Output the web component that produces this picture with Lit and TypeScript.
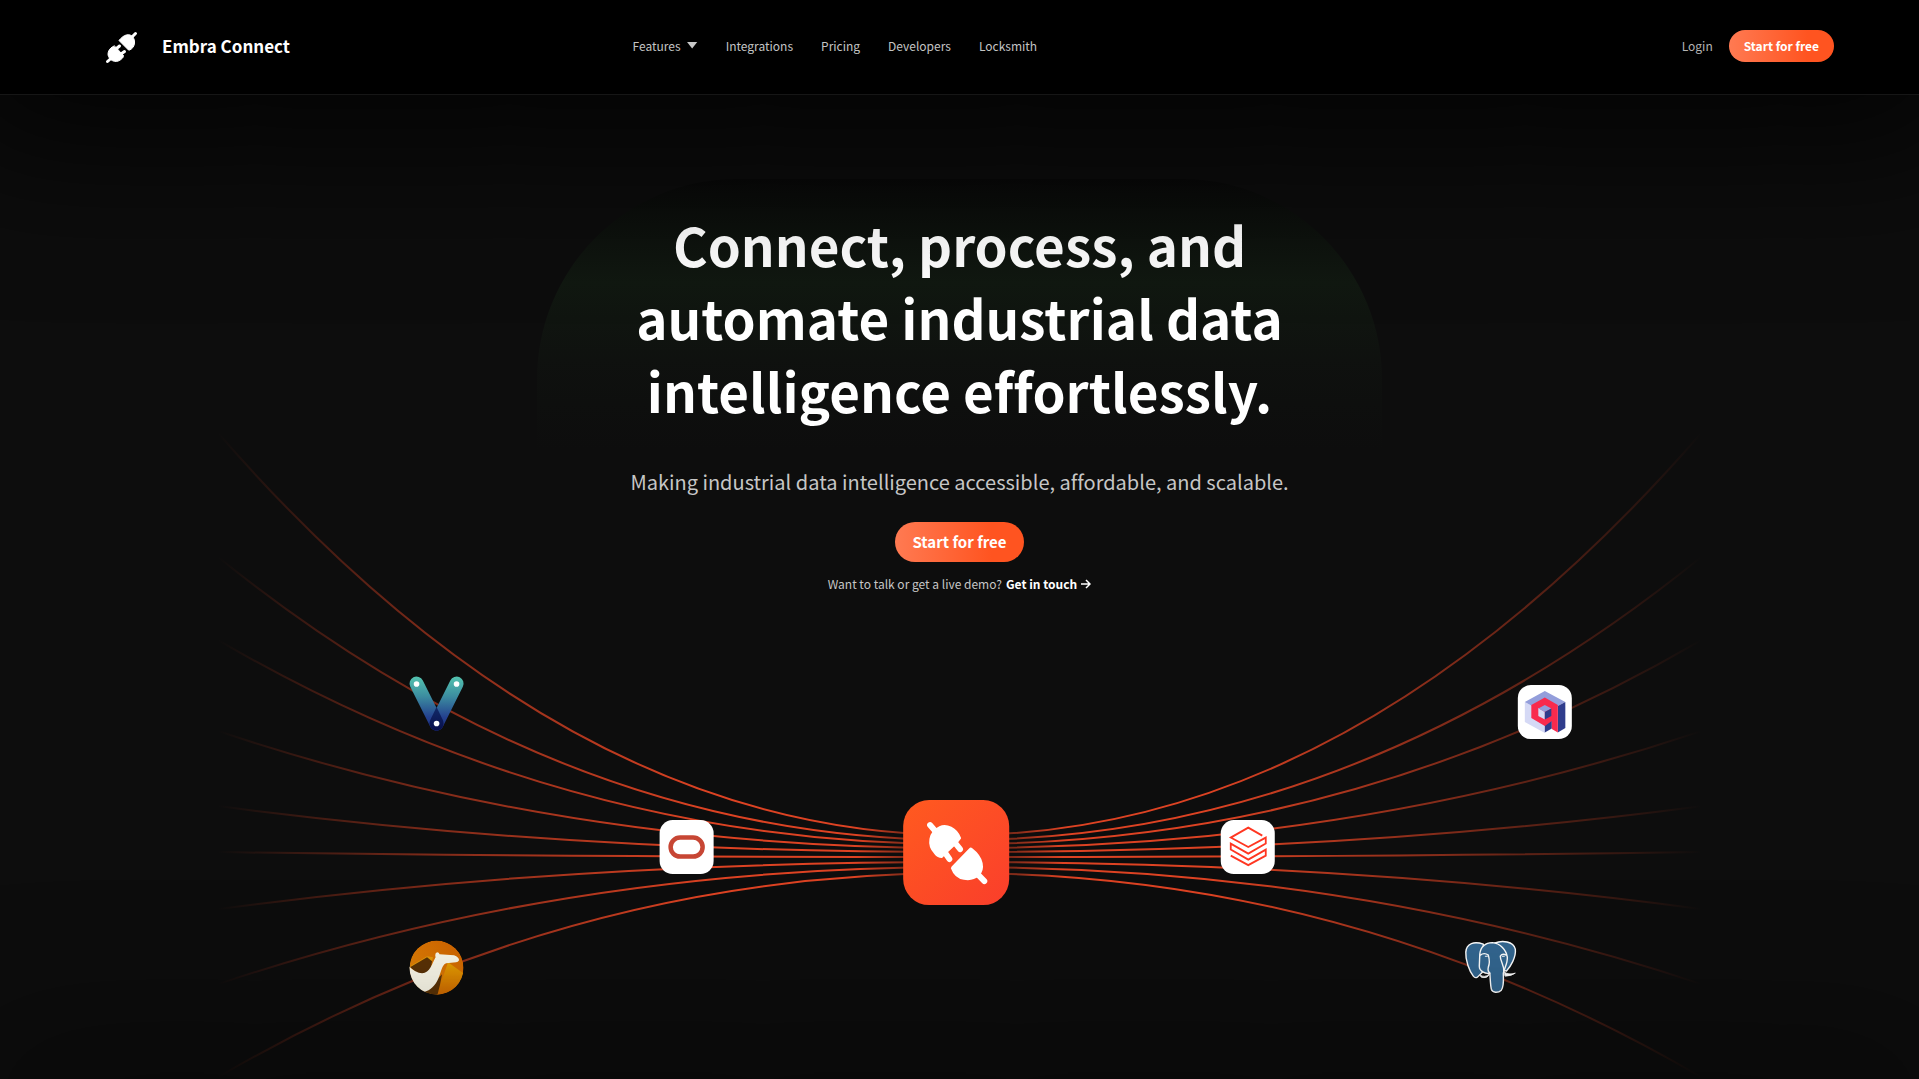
import { LitElement, html, svg, css } from "lit";
import { customElement } from "lit/decorators.js";

interface Strand {
  from: number;
  to: number;
}

/* Height of each strand at the outer edge and where it meets the hub. */
const STRANDS: Strand[] = [
  { from: 433, to: 835 },
  { from: 557, to: 840 },
  { from: 640, to: 844 },
  { from: 731, to: 848 },
  { from: 806, to: 852 },
  { from: 852, to: 857 },
  { from: 909, to: 862 },
  { from: 984, to: 867 },
  { from: 1077, to: 873 },
];

const NAV_LINKS = ["Integrations", "Pricing", "Developers", "Locksmith"];

/* Two plug halves on a 64 x 64 grid. */
const plugShape = svg`
  <g fill="#fff" stroke="#fff" stroke-linecap="round" stroke-linejoin="round">
    <path stroke-width="6" d="M5 5L13 14M31 23L36 29M20 32L25 39M54 54L61 61" />
    <path stroke-width="2" d="M36 18C32 8 22 4 15 7C4 12 2 25 10 33C12 35.5 14 37 17 37L21 33L32 23Z" />
    <path stroke-width="2" d="M48 29C60 38 61 49 55 55C47 62 32 60 28 49Q27 48 28 47L46 29Q47 28 48 29Z" />
  </g>
`;

@customElement("connection-map")
export class ConnectionMap extends LitElement {
  static styles = css`
    :host {
      display: block;
    }
    .map {
      display: block;
      width: 100%;
      height: auto;
    }
  `;

  private strands() {
    return STRANDS.map(
      ({ from, to }) => svg`
        <path d="M218 ${from}Q568 ${to} 960 ${to}" stroke="url(#fade-left)" />
        <path d="M1701 ${from}Q1351 ${to} 959 ${to}" stroke="url(#fade-right)" />
      `,
    );
  }

  render() {
    return html`
      <svg class="map" viewBox="218 430 1483 649" role="img" aria-label="Connected data sources">
        <defs>
          <linearGradient id="fade-left" gradientUnits="userSpaceOnUse" x1="218" y1="0" x2="960" y2="0">
            <stop offset="0" stop-color="#ff4b26" stop-opacity="0" />
            <stop offset="0.28" stop-color="#ff4b26" stop-opacity="0.46" />
            <stop offset="0.66" stop-color="#ff4b26" stop-opacity="0.86" />
            <stop offset="0.86" stop-color="#ff4b26" stop-opacity="0.86" />
            <stop offset="0.94" stop-color="#ff4b26" stop-opacity="0.4" />
          </linearGradient>
          <linearGradient id="fade-right" gradientUnits="userSpaceOnUse" x1="1701" y1="0" x2="959" y2="0">
            <stop offset="0" stop-color="#ff4b26" stop-opacity="0" />
            <stop offset="0.28" stop-color="#ff4b26" stop-opacity="0.4" />
            <stop offset="0.66" stop-color="#ff4b26" stop-opacity="0.86" />
            <stop offset="0.86" stop-color="#ff4b26" stop-opacity="0.86" />
            <stop offset="0.94" stop-color="#ff4b26" stop-opacity="0.4" />
          </linearGradient>
          <linearGradient id="hub" x1="0" y1="0" x2="1" y2="1">
            <stop offset="0" stop-color="#ff5a1f" />
            <stop offset="1" stop-color="#fb3f2c" />
          </linearGradient>
          <linearGradient id="arm" gradientUnits="userSpaceOnUse" x1="0" y1="678" x2="0" y2="730">
            <stop offset="0" stop-color="#52bfae" />
            <stop offset="0.35" stop-color="#3c8da0" />
            <stop offset="0.75" stop-color="#24418f" />
            <stop offset="1" stop-color="#1c2f80" />
          </linearGradient>
          <linearGradient id="joint" x1="0" y1="0" x2="0" y2="1">
            <stop offset="0" stop-color="#122a68" />
            <stop offset="1" stop-color="#080f4c" />
          </linearGradient>
          <linearGradient id="dune" x1="0" y1="0" x2="0" y2="1">
            <stop offset="0" stop-color="#e8a200" />
            <stop offset="1" stop-color="#cf6600" />
          </linearGradient>
          <linearGradient id="sky" x1="0" y1="1" x2="1" y2="0">
            <stop offset="0" stop-color="#e68a08" />
            <stop offset="1" stop-color="#cf6200" />
          </linearGradient>
          <clipPath id="disc"><circle cx="436.5" cy="967.5" r="27" /></clipPath>
        </defs>

        <g fill="none" stroke-width="2">${this.strands()}</g>

        <g stroke="url(#arm)" stroke-width="14" stroke-linecap="round" fill="none">
          <path d="M416.5 683.5L436.5 723.5" />
          <path d="M456.5 683.5L436.5 723.5" />
        </g>
        <path
          fill="url(#joint)"
          d="M436.5 707L442.8 720C445 725 442 730.5 436.5 730.5C431 730.5 428 725 430.2 720Z"
        />
        <g fill="#fff">
          <circle cx="416.5" cy="684" r="2.8" />
          <circle cx="456.5" cy="684" r="2.8" />
          <circle cx="436.5" cy="723.5" r="2.8" />
        </g>

        <g fill="#fff">
          <rect x="659.5" y="820" width="54" height="54" rx="13" />
          <rect x="1220.5" y="820" width="54" height="54" rx="13" />
          <rect x="1517.5" y="685" width="54" height="54" rx="13" />
        </g>
        <rect x="670.5" y="837.5" width="32" height="19" rx="9.5" fill="none" stroke="#c74634" stroke-width="4.5" />

        <path
          fill="none"
          stroke="#ff3621"
          stroke-width="1.8"
          d="M1262 835.5L1248 827.5L1230.5 837.5L1248 847L1265.5 837.5V843.5L1248 853.5L1230.5 843.5V849.5L1248 859.5L1265.5 849.5V855.5L1248 865L1230.5 855.5"
        />

        <path fill="#d5d9f5" d="M1524.5 702L1544.5 713V733L1524.5 722Z" />
        <path fill="#939edb" d="M1544.5 691L1565 702L1557.5 706L1544.5 713L1524.5 702Z" />
        <path fill="#2f3c8c" d="M1565 702V728L1557.5 732.5V706Z" />
        <path fill="#2f3c8c" d="M1544.5 724L1551.5 720V728.5L1544.5 732.5Z" />
        <path fill="#f92a4d" d="M1544.5 697.5L1557.5 705V732.5L1551.5 729V721L1544.5 726L1531 718V705Z" />
        <path fill="#d5d9f5" d="M1538 708L1544.5 712V719.5L1538 716Z" />
        <path fill="#939edb" d="M1544.5 705L1551 708.5L1544.5 712L1538 708.5Z" />
        <path fill="#2f3c8c" d="M1551 708.5V716L1544.5 719.5V712Z" />

        <g clip-path="url(#disc)">
          <circle cx="436.5" cy="967.5" r="27" fill="url(#sky)" />
          <path fill="#e49a0a" d="M410 966L427 956L433 957L430 968Z" />
          <path fill="url(#dune)" d="M448 962L466 975V996H436Z" />
          <path fill="#5a3206" d="M410 967L427 957L432 961L430 973L421 976Z" />
          <path fill="#5a3206" d="M442 974Q440 986 437 996H416L430 986Z" />
          <path
            fill="#fbf9ea"
            d="M408 965Q415 973 422 973C430 973 432 963 435.5 957Q434.5 953 437 952Q439 952 439.5 954L454 955Q459 957 459 960Q458 962 456 962L446 963C441 965 441 974 437 981C433 988 428 991 423 992L408 988Z"
          />
        </g>

        <g fill="#336791" stroke="#fff" stroke-width="1.4" stroke-linejoin="round" stroke-linecap="round">
          <path d="M1483 944C1474 941 1466 943 1465.5 952C1465 960 1469 971 1473 976C1476 980 1479 975 1482 972Z" />
          <path d="M1494 943C1502 940 1513 941 1515 949C1516 957 1510 967 1506 971L1498 968Z" />
          <path fill="#fff" stroke-width="0.8" d="M1480 975Q1484 978 1489 974Q1487 979 1481 977Z" />
          <path fill="#fff" stroke-width="0.8" d="M1504 972Q1508 975 1515 973Q1511 976 1505 976Z" />
          <path
            d="M1479.5 954C1480 947 1485 942.5 1492 942.5C1500 943 1506 950 1507 957C1507.5 963 1504 968 1503 973C1503 979 1504 986 1501 990C1498 993 1492 993 1491 989C1490 984 1490 979 1489.5 973C1485 974 1479 971 1479 966Z"
          />
          <path fill="none" d="M1480 955Q1484 952 1488 955Q1490 962 1488 967Q1487 971 1489.5 973M1506 955Q1502 953 1500 956C1500 962 1504 964 1503.5 972" />
          <path fill="none" stroke-width="1" d="M1485 956H1487M1502 956H1504" />
        </g>

        <rect x="903" y="800" width="106" height="105" rx="26" fill="url(#hub)" />
        <svg x="925" y="820" width="64" height="66" viewBox="0 0 66 66" preserveAspectRatio="none">
          ${plugShape}
        </svg>
      </svg>
    `;
  }
}

@customElement("app-root")
export class AppRoot extends LitElement {
  static styles = css`
    :host {
      display: flex;
      flex-direction: column;
      min-height: 100vh;
      overflow: hidden;
      background: #0d0d0d;
      color: #fff;
      font-family: "Noto Sans CJK JP", "Noto Sans", sans-serif;
      font-size: 12px;
      font-variant-ligatures: none;
      line-height: 16px;
    }
    a {
      color: inherit;
      text-decoration: none;
    }
    .header {
      position: relative;
      z-index: 1;
      display: grid;
      grid-template-columns: 5fr 11fr;
      align-items: center;
      padding: 30px 85px;
      border-bottom: 1px solid #161616;
      background: #000;
      box-shadow: 0 0 150px 50px rgba(0, 0, 0, 0.8);
    }
    .brand {
      display: flex;
      align-items: center;
      gap: 24px;
      padding-left: 20px;
      font-size: 17px;
      font-weight: 700;
    }
    .logo {
      width: 33px;
      height: 33px;
    }
    .name,
    .nav,
    .actions {
      padding-bottom: 2px;
    }
    .bar,
    .nav,
    .actions {
      display: flex;
      align-items: center;
    }
    .bar {
      justify-content: space-between;
      padding-left: 1px;
    }
    .nav {
      gap: 28px;
      color: #c4c4c4;
    }
    .actions {
      gap: 16px;
      color: #b4b4b4;
    }
    .menu {
      display: flex;
      align-items: center;
      gap: 6px;
      padding: 0;
      border: 0;
      background: none;
      color: inherit;
      font: inherit;
    }
    .caret {
      width: 11px;
      height: 7px;
      margin-bottom: 2px;
      background: #c8c8c8;
      clip-path: polygon(0 0, 100% 0, 50% 100%);
    }
    .cta {
      padding: 8px 15px;
      border-radius: 20px;
      background: linear-gradient(90deg, #ff7a52, #ff5420 75%);
      color: #fff;
      font-weight: 700;
    }
    .cta.large {
      padding: 10px 17px;
      font-size: 15px;
      line-height: 20px;
    }
    .hero {
      position: relative;
      flex: 1;
      display: grid;
      justify-items: center;
    }
    .hero::after {
      content: "";
      position: absolute;
      inset: 100% 0 auto;
      height: 40px;
      box-shadow: 0 0 150px 20px rgba(0, 0, 0, 0.6);
    }
    .copy,
    .art {
      grid-area: 1 / 1;
    }
    .art {
      align-self: end;
      width: 77.3%;
    }
    .copy {
      position: relative;
      z-index: 1;
      display: flex;
      flex-direction: column;
      align-items: center;
      align-self: start;
      width: 44%;
      padding-top: 113px;
      text-align: center;
    }
    .glow {
      position: absolute;
      z-index: -1;
      inset: 84px 0 auto;
      height: 272px;
      border-radius: 200px 200px 0 0;
      background: linear-gradient(rgba(0, 0, 0, 0.32), rgba(26, 52, 26, 0.28) 38%, rgba(26, 40, 26, 0.14) 68%, transparent);
    }
    .title {
      width: 680px;
      margin: 0;
      background: linear-gradient(#e6e6e6, #fff 40%);
      background-clip: text;
      color: transparent;
      font-size: 53px;
      font-weight: 700;
      line-height: 73px;
    }
    .lead {
      margin: 39px 0 24px;
      color: #c6c6c6;
      font-size: 20px;
      line-height: 32px;
    }
    .demo {
      display: flex;
      gap: 4px;
      margin: 14px 0 0;
      color: #c6c6c6;
    }
    .touch {
      display: flex;
      align-items: center;
      gap: 4px;
      color: #fff;
      font-weight: 700;
    }
    .arrow {
      width: 10px;
      height: 10px;
    }
  `;

  render() {
    return html`
      <header class="header">
        <a class="brand" href="#">
          <svg class="logo" viewBox="0 0 66 66" aria-hidden="true">
            <g transform="rotate(-90 33 33)">${plugShape}</g>
          </svg>
          <span class="name">Embra Connect</span>
        </a>
        <div class="bar">
          <nav class="nav">
            <button class="menu" type="button">Features <span class="caret"></span></button>
            ${NAV_LINKS.map((label) => html`<a href="#">${label}</a>`)}
          </nav>
          <div class="actions">
            <a href="#">Login</a>
            <a class="cta" href="#">Start for free</a>
          </div>
        </div>
      </header>
      <main class="hero">
        <connection-map class="art"></connection-map>
        <section class="copy">
          <div class="glow"></div>
          <h1 class="title">Connect, process, and automate industrial data intelligence effortlessly.</h1>
          <p class="lead">Making industrial data intelligence accessible, affordable, and scalable.</p>
          <a class="cta large" href="#">Start for free</a>
          <p class="demo">
            <span>Want to talk or get a live demo?</span>
            <a class="touch" href="#">
              Get in touch
              <svg class="arrow" viewBox="0 0 10 10" aria-hidden="true">
                <path d="M0 5H9M5 1L9 5L5 9" fill="none" stroke="#fff" stroke-width="1.5" />
              </svg>
            </a>
          </p>
        </section>
      </main>
    `;
  }
}
